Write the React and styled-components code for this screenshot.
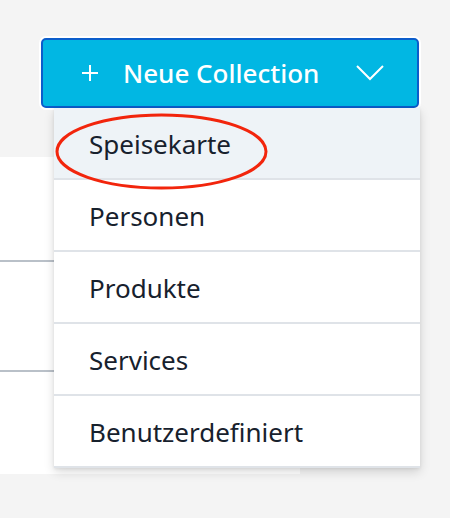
import React, { useState } from "react";
import styled, { createGlobalStyle } from "styled-components";

const GlobalStyle = createGlobalStyle`
  html, body {
    margin: 0;
    padding: 0;
    background: #f4f4f4;
    font-family: "Noto Sans", Roboto, "Liberation Sans", sans-serif;
  }
`;

const items = ["Speisekarte", "Personen", "Produkte", "Services", "Benutzerdefiniert"];

const App = () => {
  const [hovered, setHovered] = useState(0);

  return (
    <Page>
      <GlobalStyle />
      <Header>
        <MenuWrap>
          <MainButton type="button">
            <svg width="18" height="18" viewBox="0 0 18 18">
              <path d="M9 1v16M1 9h16" stroke="#fff" strokeWidth="2" fill="none" />
            </svg>
            <ButtonLabel>Neue Collection</ButtonLabel>
            <Chevron width="28" height="16" viewBox="0 0 28 16">
              <path d="M1 1l13 13L27 1" stroke="#fff" strokeWidth="2" fill="none" />
            </Chevron>
          </MainButton>
          <Dropdown>
            {items.map((item, i) => (
              <Item
                key={item}
                $active={hovered === i}
                onMouseEnter={() => setHovered(i)}
              >
                {item}
              </Item>
            ))}
            {/* annotation ring round the first entry */}
            <Ring width="213" height="77" viewBox="0 0 213 77">
              <ellipse cx="106.5" cy="38.5" rx="104.5" ry="36.5" stroke="#f2250c" strokeWidth="3" fill="none" />
            </Ring>
          </Dropdown>
        </MenuWrap>
      </Header>
      <Panel>
        <Row $h={103} />
        <Row $h={108} />
        <Row $h={102} $last />
      </Panel>
    </Page>
  );
};

export default App;

const Page = styled.div`
  width: 450px;
  height: 518px;
  background: #f4f4f4;
  overflow: hidden;
`;

const Header = styled.div`
  height: 157px;
  box-sizing: border-box;
  display: flex;
  justify-content: flex-end;
  align-items: flex-start;
  padding: 38px 31px 0 0;
`;

const MenuWrap = styled.div`
  position: relative;
  width: 378px;
  z-index: 2;
`;

const MainButton = styled.button`
  width: 100%;
  height: 70px;
  box-sizing: border-box;
  display: flex;
  align-items: center;
  padding: 0 33px 0 38px;
  background: #01b7e3;
  border: 2px solid #0b5dcb;
  border-radius: 5px;
  box-shadow: 0 0 0 2px #ffffff;
  color: #ffffff;
  cursor: pointer;
  font-family: inherit;
`;

const ButtonLabel = styled.span`
  margin-left: 24px;
  font-size: 26px;
  font-weight: 500;
`;

const Chevron = styled.svg`
  margin-left: auto;
`;

const Dropdown = styled.ul`
  position: absolute;
  top: 100%;
  left: 13px;
  right: -1px;
  margin: 0;
  padding: 0;
  list-style: none;
  background: #ffffff;
  box-shadow: 0 4px 10px rgba(0, 0, 0, 0.14), 0 1px 3px rgba(0, 0, 0, 0.08);
`;

const Item = styled.li`
  height: 72px;
  box-sizing: border-box;
  display: flex;
  align-items: center;
  padding: 2px 0 0 35px;
  border-bottom: 2px solid #dfe3e8;
  background: ${(p) => (p.$active ? "#eef3f7" : "#ffffff")};
  color: #17212d;
  font-size: 26px;
  cursor: pointer;
`;

const Ring = styled.svg`
  position: absolute;
  top: 5px;
  left: 1px;
  pointer-events: none;
`;

const Panel = styled.div`
  width: 300px;
  background: #ffffff;
`;

const Row = styled.div`
  height: ${(p) => p.$h}px;
  border-bottom: ${(p) => (p.$last ? "none" : "2px solid #b9c0c8")};
`;
